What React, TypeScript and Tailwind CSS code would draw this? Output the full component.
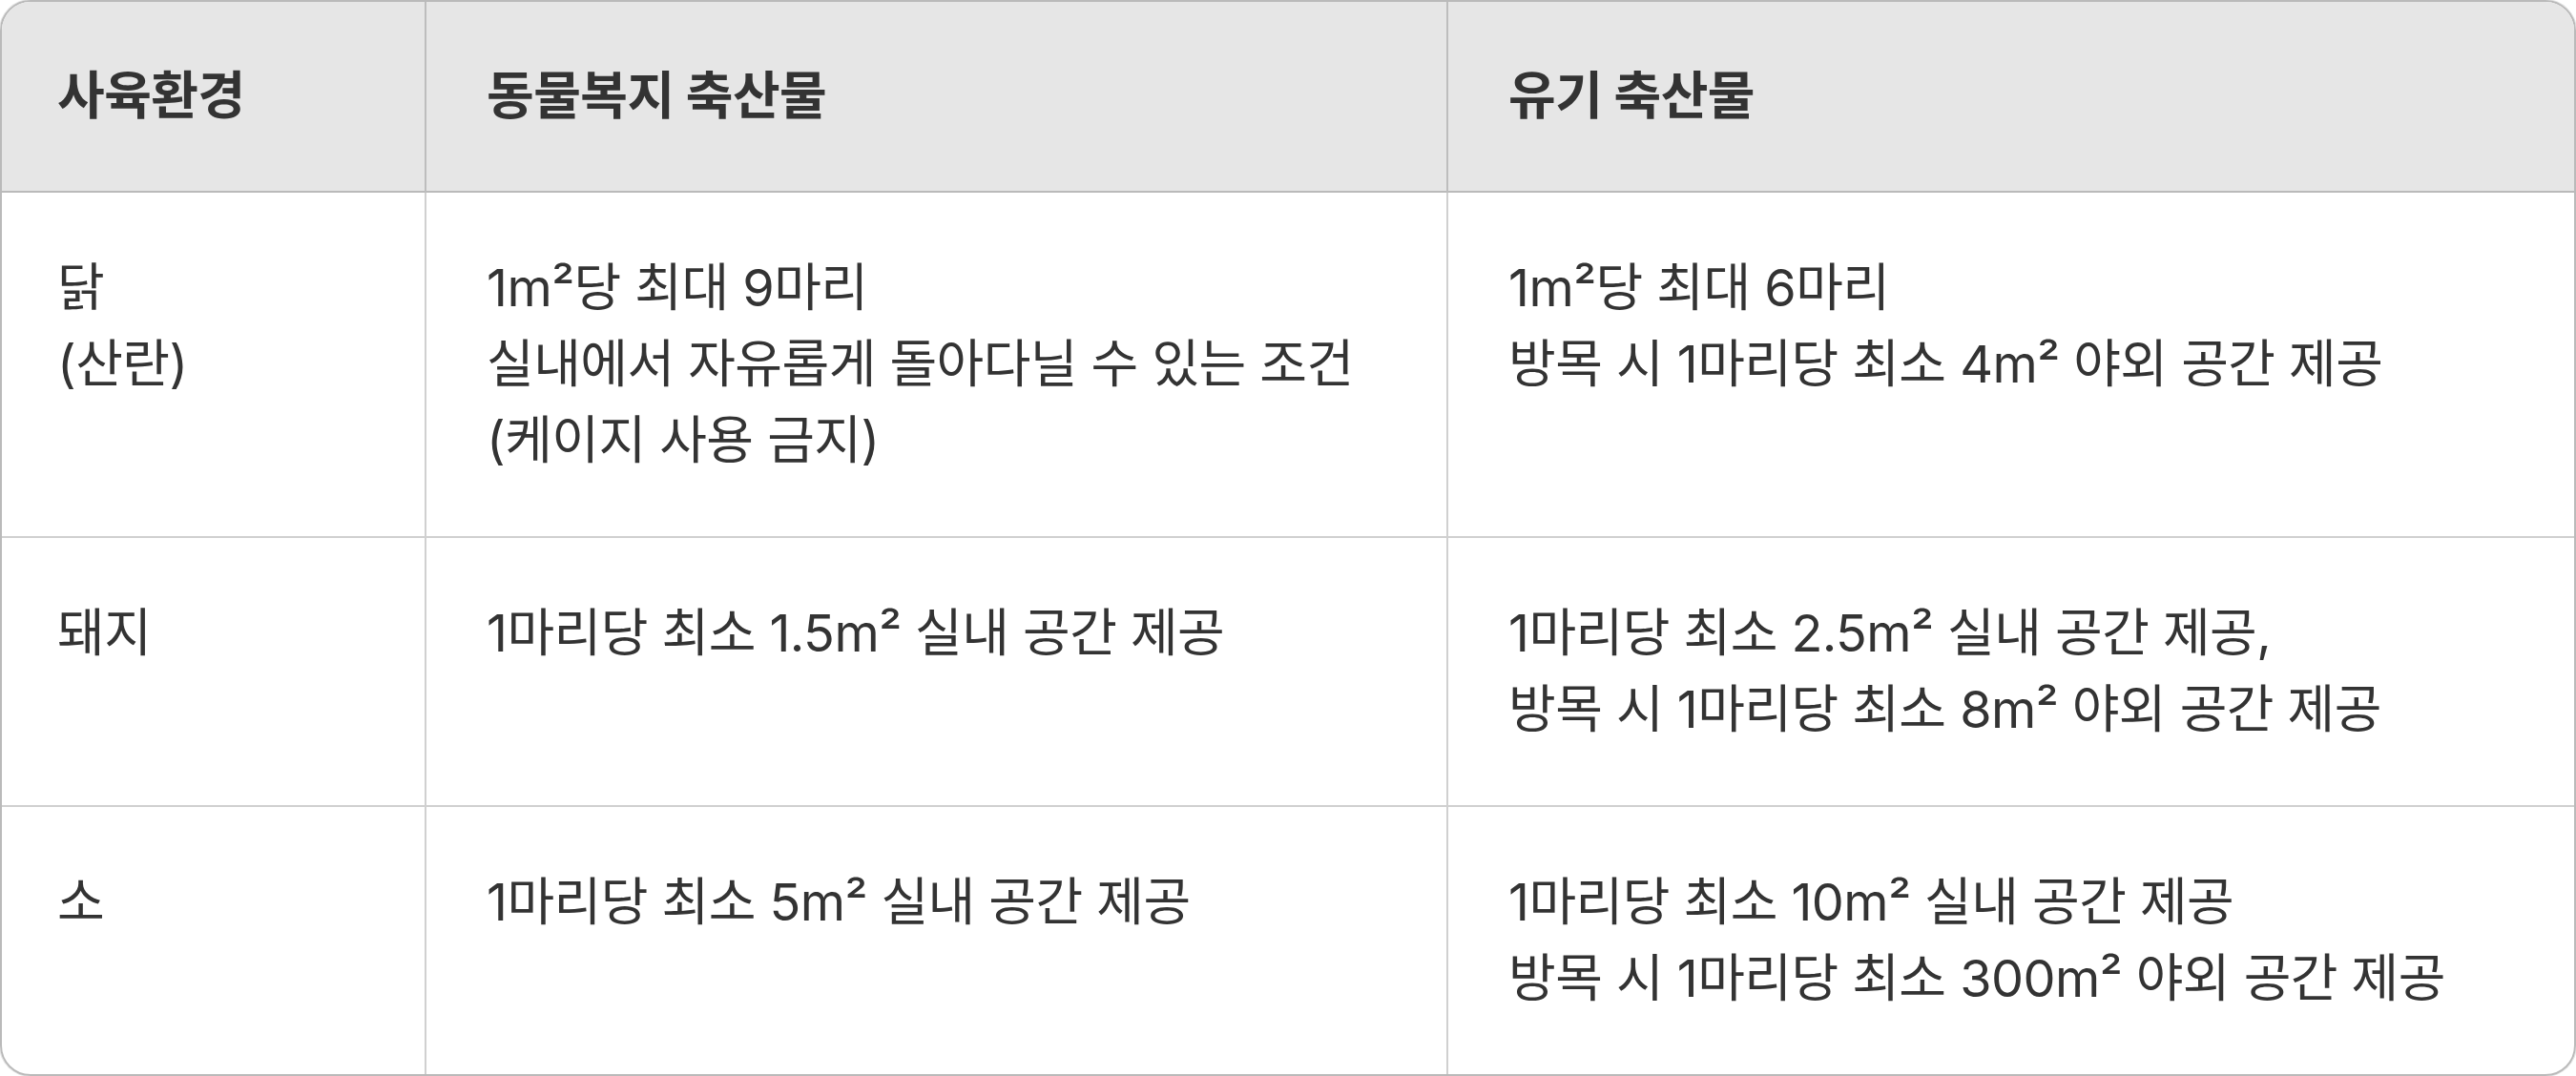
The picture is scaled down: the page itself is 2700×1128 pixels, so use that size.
type Row = {
  env: string[];
  welfare: string[];
  organic: string[];
};

const rows: Row[] = [
  {
    env: ["닭", "(산란)"],
    welfare: ["1m²당 최대 9마리", "실내에서 자유롭게 돌아다닐 수 있는 조건", "(케이지 사용 금지)"],
    organic: ["1m²당 최대 6마리", "방목 시 1마리당 최소 4m² 야외 공간 제공"],
  },
  {
    env: ["돼지"],
    welfare: ["1마리당 최소 1.5m² 실내 공간 제공"],
    organic: ["1마리당 최소 2.5m² 실내 공간 제공,", "방목 시 1마리당 최소 8m² 야외 공간 제공"],
  },
  {
    env: ["소"],
    welfare: ["1마리당 최소 5m² 실내 공간 제공"],
    organic: ["1마리당 최소 10m² 실내 공간 제공", "방목 시 1마리당 최소 300m² 야외 공간 제공"],
  },
];

function Lines({ items }: { items: string[] }) {
  return (
    <>
      {items.map((line) => (
        <div key={line}>{line}</div>
      ))}
    </>
  );
}

export default function App() {
  return (
    <div className="h-[1128px] w-[2700px] bg-white font-['Inter','Noto_Sans_CJK_KR',sans-serif] text-[#333333]">
      <div className="overflow-hidden rounded-[32px] border-2 border-[#bababa] shadow-[0_0_0_1px_#e6e6e6]">
        <table className="w-full table-fixed border-collapse text-left text-[54px] leading-[80px] tracking-[-0.01em]">
          <colgroup>
            <col className="w-[444px]" />
            <col className="w-[1071px]" />
            <col />
          </colgroup>
          <thead>
            <tr className="bg-[#e6e6e6]">
              <th className="px-[58px] py-[59px] align-top font-bold">사육환경</th>
              <th className="border-l-2 border-[#bdbdbd] px-[63px] py-[59px] align-top font-bold">
                동물복지 축산물
              </th>
              <th className="border-l-2 border-[#bdbdbd] px-[63px] py-[59px] align-top font-bold">
                유기 축산물
              </th>
            </tr>
          </thead>
          <tbody>
            {rows.map((row, i) => (
              <tr
                key={i}
                className={i === 0 ? "border-t-2 border-[#bababa]" : "border-t-2 border-[#d0d0d0]"}
              >
                <td className="px-[58px] py-[60px] align-top">
                  <Lines items={row.env} />
                </td>
                <td className="border-l-2 border-[#d0d0d0] px-[63px] py-[60px] align-top">
                  <Lines items={row.welfare} />
                </td>
                <td className="border-l-2 border-[#d0d0d0] px-[63px] py-[60px] align-top">
                  <Lines items={row.organic} />
                </td>
              </tr>
            ))}
          </tbody>
        </table>
      </div>
    </div>
  );
}
